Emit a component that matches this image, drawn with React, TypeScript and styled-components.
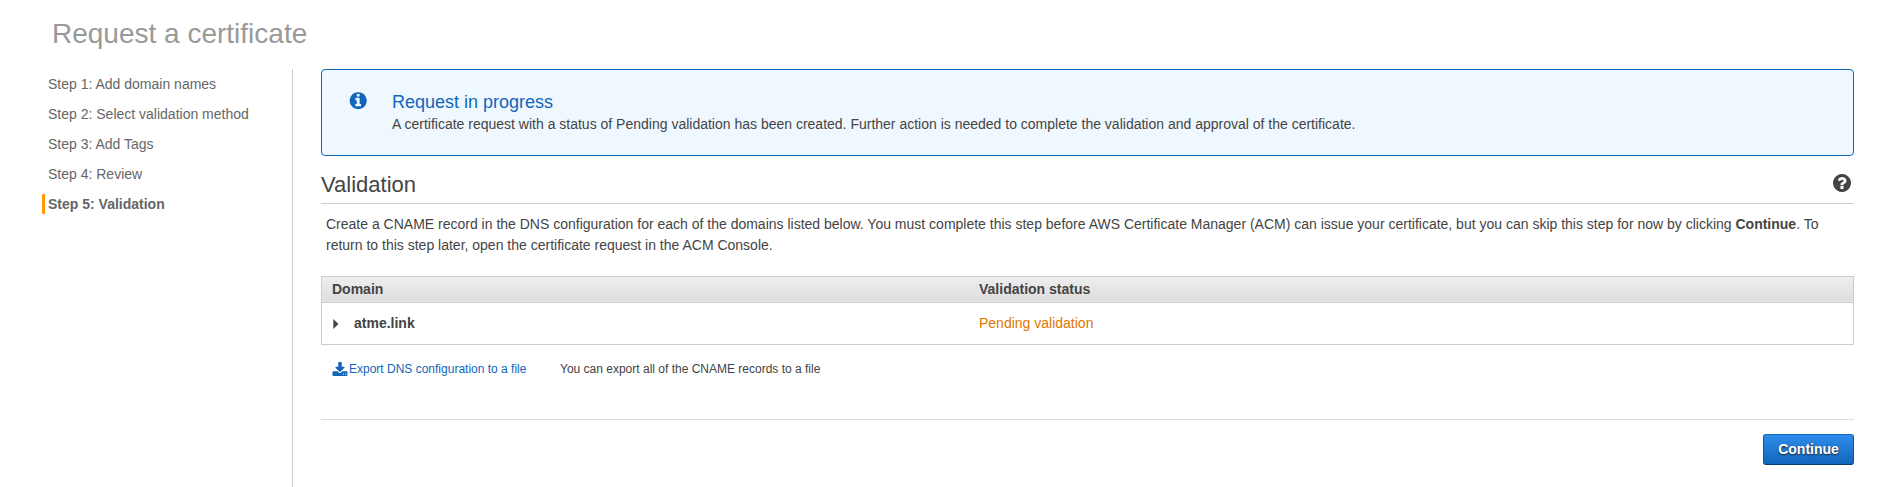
import React from "react";
import styled, { createGlobalStyle } from "styled-components";

const GlobalStyle = createGlobalStyle`
  * { box-sizing: border-box; }
  body {
    margin: 0;
    background: #fff;
    color: #444;
    font: 14px/20px "Liberation Sans", Arial, sans-serif;
  }
`;

const Page = styled.div`
  height: 100vh;
  display: flex;
  flex-direction: column;
  overflow: hidden;
`;
const PageTitle = styled.h1`
  flex: none;
  height: 69px;
  margin: 0;
  padding: 14px 0 0 52px;
  font-size: 28px;
  line-height: 40px;
  font-weight: 400;
  color: #999;
`;
const Body = styled.div`
  flex: 1;
  display: flex;
`;
const Steps = styled.nav`
  width: 293px;
  flex: none;
  padding: 5px 0 0 42px;
  border-right: 1px solid #ccc;
  display: flex;
  flex-direction: column;
  gap: 10px;
`;
const Step = styled.div<{ $active?: boolean }>`
  height: 20px;
  padding-left: 3px;
  border-left: 3px solid ${(p) => (p.$active ? "#f90" : "transparent")};
  color: #666;
  font-weight: ${(p) => (p.$active ? 700 : 400)};
`;
const Main = styled.main`
  flex: 1;
  padding: 0 45px 0 28px;
`;
const Notice = styled.section`
  height: 87px;
  padding: 21px 28px;
  display: flex;
  border: 1px solid #1166bb;
  border-radius: 4px;
  background: #f0f8ff;
`;
const NoticeIcon = styled.div`
  width: 42px;
  padding-top: 1px;
  line-height: 0;
`;
const NoticeTitle = styled.h2`
  margin: 0;
  font-size: 18px;
  line-height: 22px;
  font-weight: 400;
  color: #1166bb;
`;
const NoticeText = styled.p`
  margin: 0;
  line-height: 22px;
`;
const SectionHead = styled.header`
  height: 48px;
  padding: 3px 3px 0 0;
  display: flex;
  justify-content: space-between;
  border-bottom: 1px solid #ccc;
`;
const SectionTitle = styled.h2`
  margin: 0;
  font-size: 22px;
  line-height: 52px;
  font-weight: 400;
`;
const HelpIcon = styled.span`
  padding-top: 15px;
  line-height: 0;
`;
const Intro = styled.p`
  margin: 10px 0 20px;
  padding: 0 5px;
  line-height: 21px;
`;
const Table = styled.div`
  border: 1px solid #ccc;
`;
const TableHead = styled.div`
  display: grid;
  grid-template-columns: 647px 1fr;
  height: 26px;
  padding-left: 10px;
  border-bottom: 1px solid #ccc;
  background: linear-gradient(#eee, #ddd);
  box-shadow: inset 0 -1px #e8e8e8;
  font-weight: 700;
  line-height: 25px;
`;
const TableRow = styled.div`
  display: grid;
  grid-template-columns: 647px 1fr;
  height: 41px;
  padding-left: 10px;
  line-height: 41px;
`;
const DomainCell = styled.div`
  display: flex;
  align-items: center;
  gap: 16px;
  padding-left: 1px;
  font-weight: 700;
`;
const Arrow = styled.svg`
  width: 6px;
  height: 10px;
  margin: 1px -1px 0 0;
  fill: #444;
`;
const StatusCell = styled.div`
  color: #dd7700;
`;
const ExportBar = styled.div`
  height: 75px;
  padding: 14px 0 0 11px;
  display: flex;
  border-bottom: 1px solid #ddd;
  font-size: 12px;
`;
const ExportLink = styled.a`
  width: 228px;
  display: flex;
  gap: 2px;
  color: #1166bb;
`;
const Actions = styled.div`
  padding-top: 14px;
  display: flex;
  justify-content: flex-end;
`;
const Button = styled.button`
  width: 91px;
  height: 31px;
  padding: 0 0 1px;
  border: 1px solid;
  border-color: #1166bb #0d559c #0a3d70;
  border-radius: 3px;
  background: linear-gradient(#2f8ceb, #1166bb);
  color: #fff;
  font: 700 14px/28px "Liberation Sans", Arial, sans-serif;
  text-shadow: 0 1px 2px #222;
`;

const InfoIcon = () => (
  <svg width="17" height="17" viewBox="155 110 1536 1536" fill="#1166bb" overflow="visible">
    <path d="M1152 1376v-160q0-14-9-23t-23-9h-96v-512q0-14-9-23t-23-9h-320q-14 0-23 9t-9 23v160q0 14 9 23t23 9h96v320h-96q-14 0-23 9t-9 23v160q0 14 9 23t23 9h448q14 0 23-9t9-23zm-128-896v-160q0-14-9-23t-23-9h-192q-14 0-23 9t-9 23v160q0 14 9 23t23 9h192q14 0 23-9t9-23zm640 416q0 209-103 385.5t-279.5 279.5-385.5 103-385.5-103-279.5-279.5-103-385.5 103-385.5 279.5-279.5 385.5-103 385.5 103 279.5 279.5 103 385.5z" />
  </svg>
);
const QuestionIcon = () => (
  <svg width="18" height="18" viewBox="128 128 1536 1536" fill="#444">
    <path d="M1024 1376v-192q0-14-9-23t-23-9h-192q-14 0-23 9t-9 23v192q0 14 9 23t23 9h192q14 0 23-9t9-23zm256-672q0-88-55.5-163t-138.5-116-170-41q-243 0-371 213-15 24 8 42l132 100q7 6 19 6 16 0 25-12 53-68 86-92 34-24 86-24 48 0 85.5 26t37.5 59q0 38-20 61t-68 45q-63 28-115.5 86.5t-52.5 125.5v36q0 14 9 23t23 9h192q14 0 23-9t9-23q0-19 21.5-49.5t54.5-49.5q32-18 49-28.5t46-35 44.5-48 28-60.5 12.5-81zm384 192q0 209-103 385.5t-279.5 279.5-385.5 103-385.5-103-279.5-279.5-103-385.5 103-385.5 279.5-279.5 385.5-103 385.5 103 279.5 279.5 103 385.5z" />
  </svg>
);
const DownloadGlyph = styled.svg`
  margin-top: 3px;
  fill: #1166bb;
`;
const DownloadIcon = () => (
  <DownloadGlyph width="15" height="14" viewBox="10 0 1664 1536" overflow="visible">
    <path d="M1344 1344q0-26-19-45t-45-19-45 19-19 45 19 45 45 19 45-19 19-45zm256 0q0-26-19-45t-45-19-45 19-19 45 19 45 45 19 45-19 19-45zm128-224v320q0 40-28 68t-68 28h-1472q-40 0-68-28t-28-68v-320q0-40 28-68t68-28h465l135 136q58 56 136 56t136-56l136-136h464q40 0 68 28t28 68zm-325-569q17 41-14 70l-448 448q-18 19-45 19t-45-19l-448-448q-31-29-14-70 17-39 59-39h256v-448q0-26 19-45t45-19h256q26 0 45 19t19 45v448h256q42 0 59 39z" />
  </DownloadGlyph>
);

const steps = ["Add domain names", "Select validation method", "Add Tags", "Review", "Validation"];

export default function App() {
  return (
    <Page>
      <GlobalStyle />
      <PageTitle>Request a certificate</PageTitle>
      <Body>
        <Steps>
          {steps.map((name, i) => (
            <Step key={name} $active={i === 4}>{`Step ${i + 1}: ${name}`}</Step>
          ))}
        </Steps>
        <Main>
          <Notice>
            <NoticeIcon><InfoIcon /></NoticeIcon>
            <div>
              <NoticeTitle>Request in progress</NoticeTitle>
              <NoticeText>
                A certificate request with a status of Pending validation has been created. Further action is needed to
                complete the validation and approval of the certificate.
              </NoticeText>
            </div>
          </Notice>
          <SectionHead>
            <SectionTitle>Validation</SectionTitle>
            <HelpIcon><QuestionIcon /></HelpIcon>
          </SectionHead>
          <Intro>
            Create a CNAME record in the DNS configuration for each of the domains listed below. You must complete this
            step before AWS Certificate Manager (ACM) can issue your certificate, but you can skip this step for now by
            clicking <b>Continue</b>. To return to this step later, open the certificate request in the ACM Console.
          </Intro>
          <Table>
            <TableHead>
              <div>Domain</div>
              <div>Validation status</div>
            </TableHead>
            <TableRow>
              <DomainCell>
                <Arrow viewBox="0 0 6 10"><path d="M0.3 0v10l5.2-5z" /></Arrow>
                atme.link
              </DomainCell>
              <StatusCell>Pending validation</StatusCell>
            </TableRow>
          </Table>
          <ExportBar>
            <ExportLink><DownloadIcon />Export DNS configuration to a file</ExportLink>
            <span>You can export all of the CNAME records to a file</span>
          </ExportBar>
          <Actions><Button>Continue</Button></Actions>
        </Main>
      </Body>
    </Page>
  );
}
